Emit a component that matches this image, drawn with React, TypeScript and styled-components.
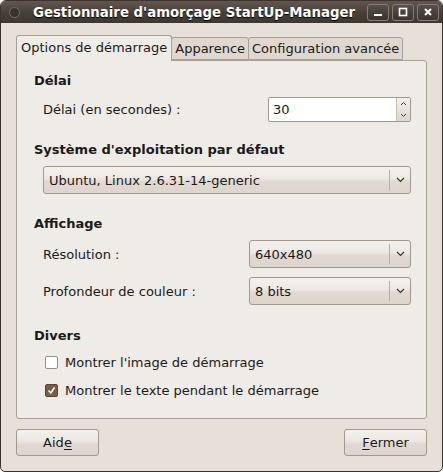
import React from "react";
import styled, { createGlobalStyle } from "styled-components";

const GlobalStyle = createGlobalStyle`
  html, body {
    margin: 0;
    padding: 0;
    background: #ffffff;
  }
  body {
    font-family: "DejaVu Sans", "Liberation Sans", sans-serif;
    font-size: 13px;
    color: #1a1a1a;
  }
`;

const Window = styled.div`
  width: 443px;
  height: 472px;
  box-sizing: border-box;
  display: flex;
  flex-direction: column;
  background: #e6e0d9;
  border: 1px solid #3a332e;
  border-radius: 6px 6px 5px 5px;
  overflow: hidden;
`;

const TitleBar = styled.div`
  height: 22px;
  flex-shrink: 0;
  display: flex;
  align-items: center;
  padding: 0 2px 0 7px;
  background: linear-gradient(#62574f, #4a413b 50%, #3e3631);
  color: #ffffff;
`;

const TitleDot = styled.div`
  width: 9px;
  height: 9px;
  border-radius: 50%;
  background: #3a322d;
  border: 1px solid #7a6e66;
  margin-right: 13px;
  margin-left: 1px;
`;

const Title = styled.div`
  flex: 1;
  font-weight: bold;
  font-size: 13.3px;
  text-shadow: 0 1px 1px #000;
  white-space: nowrap;
`;

const TitleButtons = styled.div`
  display: flex;
  gap: 3px;
  margin-right: 1px;
`;

const TitleButton = styled.div`
  width: 20px;
  height: 15px;
  border: 1px solid #8a7d73;
  border-radius: 3px;
  background: linear-gradient(#5a4f48, #3c3430);
  display: flex;
  align-items: center;
  justify-content: center;
`;

const Body = styled.div`
  flex: 1;
  display: flex;
  flex-direction: column;
  padding: 12px 15px 15px 15px;
`;

const TabRow = styled.div`
  display: flex;
  align-items: flex-end;
  height: 26px;
  position: relative;
  z-index: 1;
  margin-bottom: -1px;
`;

const Tab = styled.div<{ active?: boolean }>`
  box-sizing: border-box;
  height: ${(p) => (p.active ? "26px" : "23px")};
  padding: ${(p) => (p.active ? "4px 4px 0 4px" : "3px 3px 0 3px")};
  margin-bottom: ${(p) => (p.active ? "0" : "1px")};
  background: ${(p) => (p.active ? "#efebe7" : "#e0d8cf")};
  border: 1px solid #a99f95;
  border-bottom: ${(p) => (p.active ? "none" : "1px solid #a99f95")};
  border-radius: 3px 3px 0 0;
  white-space: nowrap;
  & + & {
    margin-left: -1px;
  }
`;

const Panel = styled.div`
  height: 359px;
  box-sizing: border-box;
  background: #efebe7;
  border: 1px solid #a99f95;
  border-radius: 0 3px 3px 3px;
  width: 411px;
  padding: 12px 15px 0 17px;
  display: flex;
  flex-direction: column;
`;

const Heading = styled.div<{ gap?: number }>`
  font-weight: bold;
  height: 16px;
  line-height: 16px;
  margin-top: ${(p) => p.gap ?? 0}px;
  margin-bottom: 8px;
`;

const Row = styled.div<{ h?: number }>`
  display: flex;
  align-items: center;
  justify-content: space-between;
  padding-left: 9px;
  height: ${(p) => p.h ?? 28}px;
  & + & {
    margin-top: 9px;
  }
`;

const Label = styled.span``;

const Spin = styled.div`
  display: flex;
  width: 143px;
  height: 25px;
  box-sizing: border-box;
  border: 1px solid #a3988c;
  border-radius: 2px;
  background: #ffffff;
  overflow: hidden;
`;

const SpinText = styled.div`
  flex: 1;
  padding-left: 4px;
  line-height: 23px;
  border-right: 1px solid #c8bfb5;
`;

const SpinButtons = styled.div`
  width: 13px;
  display: flex;
  flex-direction: column;
  align-items: center;
  justify-content: space-around;
  background: linear-gradient(#f4f1ed, #ddd5cc);
`;

const Combo = styled.div<{ width: number }>`
  width: ${(p) => p.width}px;
  height: 28px;
  box-sizing: border-box;
  display: flex;
  align-items: center;
  border: 1px solid #a3988c;
  border-radius: 3px;
  background: linear-gradient(#f4f1ed, #ede8e3 45%, #e2dad2 55%, #ddd5cc);
`;

const ComboText = styled.div`
  flex: 1;
  padding-left: 5px;
`;

const ComboSep = styled.div`
  width: 1px;
  height: 20px;
  background: #b8aea3;
`;

const ComboArrow = styled.div`
  width: 20px;
  display: flex;
  justify-content: center;
`;

const CheckRow = styled.label`
  display: flex;
  align-items: center;
  height: 20px;
  padding-left: 11px;
  & + & {
    margin-top: 8px;
  }
`;

const Box = styled.span<{ checked?: boolean }>`
  width: 11px;
  height: 11px;
  border: 1px solid ${(p) => (p.checked ? "#5e4232" : "#9c8f83")};
  border-radius: 2px;
  background: ${(p) => (p.checked ? "#7c5a46" : "#ffffff")};
  margin-right: 7px;
  display: flex;
  align-items: center;
  justify-content: center;
`;

const ButtonRow = styled.div`
  display: flex;
  justify-content: space-between;
  margin-top: 10px;
`;

const Button = styled.div`
  width: 83px;
  height: 27px;
  box-sizing: border-box;
  display: flex;
  align-items: center;
  justify-content: center;
  border: 1px solid #a3988c;
  border-radius: 3px;
  background: linear-gradient(#f4f1ed, #ece7e2 45%, #e2dad2 55%, #ddd5cc);
  u {
    text-decoration: underline;
    text-underline-offset: 2px;
  }
`;

const Chevron = ({ up }: { up?: boolean }) => (
  <svg width="9" height="6" viewBox="0 0 9 6">
    <path
      d={up ? "M1 5 L4.5 1.5 L8 5" : "M1 1 L4.5 4.5 L8 1"}
      fill="none"
      stroke="#3c3632"
      strokeWidth="1.2"
    />
  </svg>
);

const SmallChevron = ({ up }: { up?: boolean }) => (
  <svg width="7" height="5" viewBox="0 0 7 5">
    <path
      d={up ? "M1 4 L3.5 1.5 L6 4" : "M1 1 L3.5 3.5 L6 1"}
      fill="none"
      stroke="#4a423c"
      strokeWidth="1"
    />
  </svg>
);

function ComboBox({ value, width }: { value: string; width: number }) {
  return (
    <Combo width={width}>
      <ComboText>{value}</ComboText>
      <ComboSep />
      <ComboArrow>
        <Chevron />
      </ComboArrow>
    </Combo>
  );
}

export default function App() {
  return (
    <>
      <GlobalStyle />
      <Window>
        <TitleBar>
          <TitleDot />
          <Title>Gestionnaire d'amorçage StartUp-Manager</Title>
          <TitleButtons>
            <TitleButton>
              <svg width="10" height="10" viewBox="0 0 10 10">
                <rect x="1" y="7" width="8" height="2" fill="#fff" />
              </svg>
            </TitleButton>
            <TitleButton>
              <svg width="10" height="10" viewBox="0 0 10 10">
                <rect x="1.5" y="1.5" width="7" height="7" fill="none" stroke="#fff" strokeWidth="1.6" />
              </svg>
            </TitleButton>
            <TitleButton>
              <svg width="10" height="10" viewBox="0 0 10 10">
                <path d="M2 2 L8 8 M8 2 L2 8" stroke="#fff" strokeWidth="2" />
              </svg>
            </TitleButton>
          </TitleButtons>
        </TitleBar>
        <Body>
          <TabRow>
            <Tab active>Options de démarrage</Tab>
            <Tab>Apparence</Tab>
            <Tab>Configuration avancée</Tab>
          </TabRow>
          <Panel>
            <Heading>Délai</Heading>
            <Row h={25}>
              <Label>Délai (en secondes) :</Label>
              <Spin>
                <SpinText>30</SpinText>
                <SpinButtons>
                  <SmallChevron up />
                  <SmallChevron />
                </SpinButtons>
              </Spin>
            </Row>
            <Heading gap={20}>Système d'exploitation par défaut</Heading>
            <Row>
              <ComboBox value="Ubuntu, Linux 2.6.31-14-generic" width={368} />
            </Row>
            <Heading gap={22}>Affichage</Heading>
            <Row>
              <Label>Résolution :</Label>
              <ComboBox value="640x480" width={162} />
            </Row>
            <Row>
              <Label>Profondeur de couleur :</Label>
              <ComboBox value="8 bits" width={162} />
            </Row>
            <Heading gap={23}>Divers</Heading>
            <CheckRow>
              <Box />
              Montrer l'image de démarrage
            </CheckRow>
            <CheckRow>
              <Box checked>
                <svg width="9" height="9" viewBox="0 0 9 9">
                  <path d="M1.5 4.5 L3.8 7 L7.5 1.5" fill="none" stroke="#fff" strokeWidth="1.6" />
                </svg>
              </Box>
              Montrer le texte pendant le démarrage
            </CheckRow>
          </Panel>
          <ButtonRow>
            <Button>
              Aid<u>e</u>
            </Button>
            <Button>
              <u>F</u>ermer
            </Button>
          </ButtonRow>
        </Body>
      </Window>
    </>
  );
}
